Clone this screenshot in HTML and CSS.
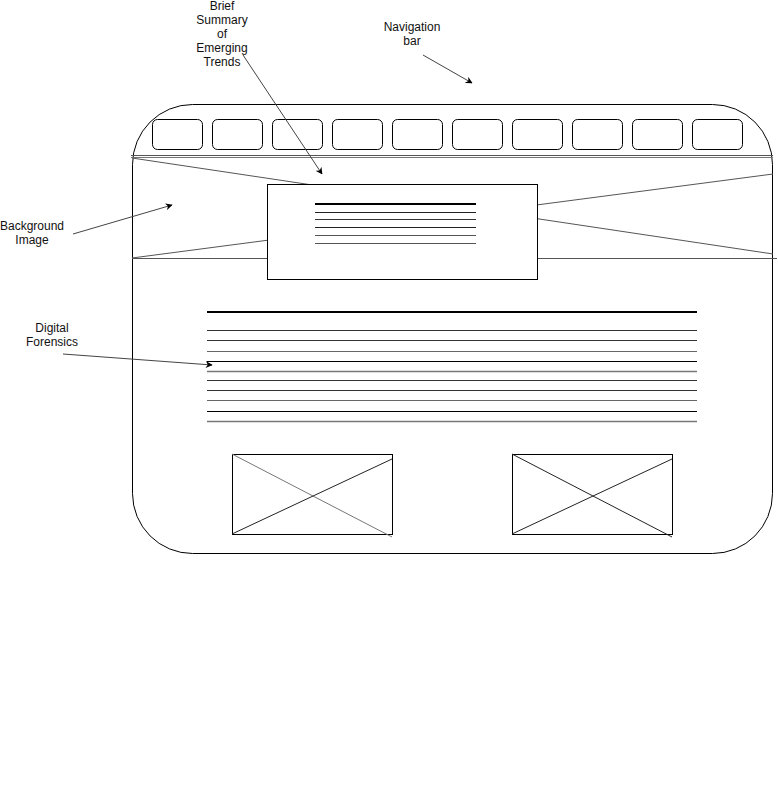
FILE: index.html
```html
<!DOCTYPE html>
<html lang="en">
<head>
    <meta charset="UTF-8">
    <title>Wireframe - Emerging Trends</title>
    <link rel="stylesheet" href="styles.css">
</head>
<body>
    <div class="canvas">
        <svg class="drawing" width="778" height="795" viewBox="0 0 778 795">
            <defs>
                <marker id="arrow" viewBox="0 0 10 10" refX="9" refY="5" markerWidth="7" markerHeight="7" orient="auto">
                    <path d="M0 0 L10 5 L0 10 L3 5 Z" fill="#000"/>
                </marker>
            </defs>

            <!-- page frame -->
            <rect x="132.5" y="104.5" width="640" height="449" rx="60" ry="60" fill="#fff" stroke="#000"/>

            <!-- navigation buttons -->
            <g fill="#fff" stroke="#000">
                <rect x="152.5" y="119.5" width="50" height="30" rx="5"/>
                <rect x="212.5" y="119.5" width="50" height="30" rx="5"/>
                <rect x="272.5" y="119.5" width="50" height="30" rx="5"/>
                <rect x="332.5" y="119.5" width="50" height="30" rx="5"/>
                <rect x="392.5" y="119.5" width="50" height="30" rx="5"/>
                <rect x="452.5" y="119.5" width="50" height="30" rx="5"/>
                <rect x="512.5" y="119.5" width="50" height="30" rx="5"/>
                <rect x="572.5" y="119.5" width="50" height="30" rx="5"/>
                <rect x="632.5" y="119.5" width="50" height="30" rx="5"/>
                <rect x="692.5" y="119.5" width="50" height="30" rx="5"/>
            </g>

            <!-- background image placeholder -->
            <g stroke="#555" fill="none">
                <line x1="131" y1="155.5" x2="773" y2="155.5"/>
                <line x1="131" y1="157.5" x2="773" y2="157.5" stroke="#777"/>
                <line x1="132" y1="158" x2="773" y2="254"/>
                <line x1="132" y1="258" x2="773" y2="174"/>
                <line x1="132" y1="258.5" x2="777" y2="258.5"/>
            </g>

            <!-- summary box -->
            <rect x="267.5" y="184.5" width="270" height="95" fill="#fff" stroke="#000"/>
            <g stroke="#000">
                <line x1="315" y1="204" x2="476" y2="204" stroke-width="2"/>
                <line x1="315" y1="212.5" x2="476" y2="212.5" stroke="#222"/>
                <line x1="315" y1="219.5" x2="476" y2="219.5" stroke="#333"/>
                <line x1="315" y1="227.5" x2="476" y2="227.5" stroke="#222"/>
                <line x1="315" y1="235.5" x2="476" y2="235.5" stroke="#555"/>
                <line x1="315" y1="243.5" x2="476" y2="243.5" stroke="#555"/>
            </g>

            <!-- digital forensics text -->
            <g stroke="#333">
                <line x1="207" y1="312" x2="697" y2="312" stroke-width="2" stroke="#000"/>
                <line x1="207" y1="330.5" x2="697" y2="330.5"/>
                <line x1="207" y1="340.5" x2="697" y2="340.5"/>
                <line x1="207" y1="351.5" x2="697" y2="351.5" stroke="#666"/>
                <line x1="207" y1="361.5" x2="697" y2="361.5" stroke="#000"/>
                <line x1="207" y1="371.5" x2="697" y2="371.5" stroke="#777" stroke-width="1.5"/>
                <line x1="207" y1="380.5" x2="697" y2="380.5"/>
                <line x1="207" y1="390.5" x2="697" y2="390.5"/>
                <line x1="207" y1="400.5" x2="697" y2="400.5" stroke="#666"/>
                <line x1="207" y1="411.5" x2="697" y2="411.5" stroke="#000"/>
                <line x1="207" y1="421.5" x2="697" y2="421.5" stroke="#777" stroke-width="1.5"/>
            </g>

            <!-- image placeholders -->
            <rect x="232.5" y="454.5" width="160" height="80" fill="#fff" stroke="#000"/>
            <line x1="232" y1="454" x2="392" y2="537" stroke="#777"/>
            <line x1="232" y1="534" x2="392" y2="459" stroke="#222"/>
            <rect x="512.5" y="454.5" width="160" height="80" fill="#fff" stroke="#000"/>
            <line x1="512" y1="454" x2="672" y2="537" stroke="#222"/>
            <line x1="512" y1="534" x2="672" y2="459" stroke="#222"/>

            <!-- annotation arrows -->
            <g stroke="#444" marker-end="url(#arrow)">
                <line x1="243" y1="55" x2="322" y2="174"/>
                <line x1="423" y1="55" x2="472" y2="83"/>
                <line x1="73" y1="234" x2="172" y2="205"/>
                <line x1="63" y1="354" x2="212" y2="365"/>
            </g>
        </svg>

        <div class="note note-summary">Brief<br>Summary<br>of<br>Emerging<br>Trends</div>
        <div class="note note-nav">Navigation<br>bar</div>
        <div class="note note-bg">Background<br>Image</div>
        <div class="note note-forensics">Digital<br>Forensics</div>
    </div>
</body>
</html>
```

FILE: styles.css
```css
body {
    margin: 0;
    background: #fff;
    font-family: 'Liberation Sans', Arial, sans-serif;
    color: #111;
}

.canvas {
    position: relative;
    width: 778px;
    height: 795px;
    overflow: hidden;
}

.drawing {
    display: block;
}

/* annotation labels sit on the diagram canvas */
.note {
    position: absolute;
    width: 80px;
    font-size: 12px;
    line-height: 14px;
    text-align: center;
}

.note-summary { left: 182px; top: -1px; }
.note-nav { left: 372px; top: 20px; }
.note-bg { left: -8px; top: 219px; }
.note-forensics { left: 12px; top: 321px; }
```
